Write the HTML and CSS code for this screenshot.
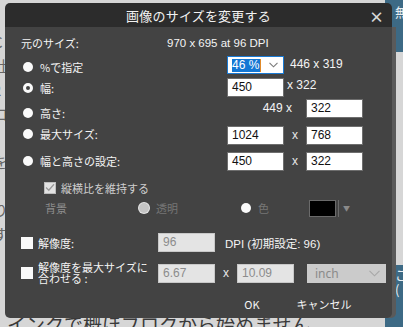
FILE: index.html
```html
<!DOCTYPE html>
<html lang="ja">
<head>
    <meta charset="UTF-8">
    <title>画像のサイズを変更する</title>
    <link rel="stylesheet" href="styles.css">
</head>
<body>
    <div class="backdrop">
        <div class="page-text">
            <p>C</p>
            <p>社</p>
            <p>2</p>
            <p>ロ</p>
            <p>/</p>
            <p>を</p>
            <p>!</p>
            <p>り</p>
            <p>す</p>
            <p class="page-line">インクで概ほブロクから始めません</p>
        </div>
        <div class="side">
            <div class="side-blue side-top">無</div>
            <div class="side-gray"></div>
            <div class="side-blue side-bottom">こ<br>(</div>
        </div>
    </div>

    <div class="dialog">
        <div class="titlebar">
            <span class="title">画像のサイズを変更する</span>
            <span class="close">×</span>
        </div>

        <div class="body">
            <div class="orig">
                <span class="orig-label">元のサイズ:</span>
                <span class="orig-value">970 x 695 at 96 DPI</span>
            </div>

            <div class="row row-pct">
                <label class="opt"><span class="radio"></span>%で指定</label>
                <div class="select active">
                    <span class="sel-text">46 %</span>
                    <svg class="chev" width="9" height="6" viewBox="0 0 9 6"><path d="M0.5 0.8 L4.5 4.8 L8.5 0.8" fill="none" stroke="#7a7a7a" stroke-width="1.1"/></svg>
                </div>
                <span class="note note-pct">446 x 319</span>
            </div>

            <div class="row row-w">
                <label class="opt"><span class="radio ring"></span>幅:</label>
                <div class="field">450</div>
                <span class="note note-w">x 322</span>
            </div>

            <div class="row row-h">
                <label class="opt"><span class="radio"></span>高さ:</label>
                <span class="note note-h">449 x</span>
                <div class="field">322</div>
            </div>

            <div class="row row-max">
                <label class="opt"><span class="radio"></span>最大サイズ:</label>
                <div class="field">1024</div>
                <span class="times">x</span>
                <div class="field">768</div>
            </div>

            <div class="row row-set">
                <label class="opt"><span class="radio"></span>幅と高さの設定:</label>
                <div class="field">450</div>
                <span class="times">x</span>
                <div class="field">322</div>
            </div>

            <div class="keep">
                <span class="check checked">
                    <svg width="10" height="9" viewBox="0 0 10 9"><path d="M1 4.5 L3.8 7.2 L9 1.2" fill="none" stroke="#9a9a9a" stroke-width="1.3"/></svg>
                </span>
                <span class="keep-label">縦横比を維持する</span>
            </div>

            <div class="bg-row">
                <span class="bg-label">背景</span>
                <span class="bg-opt bg-opt-clear"><span class="radio dim"></span>透明</span>
                <span class="bg-opt bg-opt-color"><span class="radio"></span>色</span>
                <span class="swatch"></span>
                <span class="swatch-drop">▼</span>
            </div>

            <div class="res res-dpi">
                <label class="res-opt"><span class="check"></span>解像度:</label>
                <div class="field off">96</div>
                <span class="dpi-note">DPI (初期設定: 96)</span>
            </div>

            <div class="res res-fit">
                <label class="res-opt"><span class="check"></span><span class="two-line">解像度を最大サイズに<br>合わせる :</span></label>
                <div class="field off">6.67</div>
                <span class="times">x</span>
                <div class="field off">10.09</div>
                <div class="select off">
                    <span class="sel-text">inch</span>
                    <svg class="chev" width="11" height="7" viewBox="0 0 11 7"><path d="M0.5 0.8 L5.5 5.8 L10.5 0.8" fill="none" stroke="#a8a8a8" stroke-width="1.1"/></svg>
                </div>
            </div>

            <div class="actions">
                <button class="btn">OK</button>
                <button class="btn">キャンセル</button>
            </div>
        </div>
    </div>
</body>
</html>
```

FILE: styles.css
```css
* {
    margin: 0;
    padding: 0;
    box-sizing: border-box;
}

body {
    width: 403px;
    height: 327px;
    overflow: hidden;
    position: relative;
    background: #d6d6d6;
    font-family: "Noto Sans CJK JP", "Noto Sans", sans-serif;
}

/* page behind the dialog */
.backdrop {
    display: flex;
    height: 327px;
}

.page-text {
    flex: 1;
    display: flex;
    flex-direction: column;
    padding-top: 30px;
    margin-left: -7px;
    color: #666;
    font-size: 15px;
    line-height: 24px;
}

.page-text .page-line {
    margin-top: auto;
    margin-bottom: -10px;
    margin-left: 14px;
    font-size: 19px;
    line-height: 26px;
    color: #3a3a3a;
    white-space: nowrap;
}

.side {
    width: 18px;
    display: flex;
    flex-direction: column;
}

.side-blue {
    background: #3d6a85;
    color: #e8eef2;
    font-size: 13px;
    line-height: 15px;
    padding-left: 10px;
}

.side-top {
    height: 52px;
    padding-top: 4px;
}

.side-gray {
    flex: 1;
}

.side-bottom {
    height: 62px;
    padding-top: 2px;
}

/* dialog */
.dialog {
    position: absolute;
    left: 5px;
    top: 3px;
    width: 387px;
    height: 315px;
}

.titlebar {
    height: 24px;
    background: #2c2c2c;
    border-radius: 5px 5px 0 0;
    display: flex;
    align-items: center;
    justify-content: center;
    position: relative;
}

.title {
    color: #f2f2f2;
    font-size: 13px;
    letter-spacing: 0.2px;
}

.close {
    position: absolute;
    right: 8px;
    top: 3px;
    color: #d8d8d8;
    font-size: 15px;
    font-weight: bold;
}

.body {
    height: 291px;
    background: #434343;
    border-radius: 0 0 5px 5px;
    box-shadow: 4px 0 0 #5a5a5a;
    padding: 9px 0 0 16px;
    color: #f4f4f4;
    font-size: 11px;
}

.orig {
    height: 20px;
    display: flex;
    line-height: 14px;
}

.orig-label {
    width: 146px;
}

.orig-value {
    font-family: "Liberation Sans", sans-serif;
    font-size: 11.5px;
}

/* size options */
.row {
    display: grid;
    grid-template-columns: 206px 57px 22px 57px 1fr;
    align-items: start;
}

.opt {
    display: flex;
    align-items: center;
    padding-left: 2px;
    line-height: 14px;
}

.radio {
    width: 10px;
    height: 10px;
    border-radius: 50%;
    background: #fafafa;
    margin-right: 7px;
    flex: none;
}

.radio.ring {
    background: #434343;
    border: 3px solid #fafafa;
}

.radio.dim {
    background: #c4c4c4;
    box-shadow: 0 0 0 1px #e6e6e6;
}

.field,
.select {
    height: 19px;
    border: 1px solid #6e6e6e;
    background: #fff;
    color: #111;
    font-family: "Liberation Sans", sans-serif;
    font-size: 12px;
    line-height: 17px;
    padding-left: 4px;
}

.select {
    display: flex;
    justify-content: space-between;
    align-items: center;
    padding-right: 5px;
}

.select.active {
    height: 18px;
    border-color: #1a7ad4;
}

.select.active .sel-text {
    background: #1477d4;
    color: #fff;
    line-height: 13px;
    padding-right: 1px;
    border-right: 1px solid #e08a2a;
}

.note {
    font-family: "Liberation Sans", sans-serif;
    font-size: 12px;
    line-height: 14px;
    color: #f4f4f4;
    white-space: nowrap;
}

.times {
    font-family: "Liberation Sans", sans-serif;
    font-size: 12px;
    line-height: 19px;
    text-align: center;
    color: #e8e8e8;
}

.row-pct {
    height: 22px;
}

.row-pct .opt {
    padding-top: 4px;
}

.note-pct {
    grid-column: 3 / 6;
    padding-left: 6px;
    padding-top: 1px;
}

.row-w {
    height: 21px;
}

.row-w .opt {
    padding-top: 3px;
}

.note-w {
    grid-column: 3 / 6;
    padding-left: 3px;
    padding-top: 0;
}

.row-h {
    height: 27px;
}

.row-h .opt {
    padding-top: 7px;
}

.note-h {
    grid-column: 2 / 4;
    text-align: right;
    padding-right: 14px;
    padding-top: 2px;
}

.row-max {
    height: 26px;
}

.row-max .opt {
    padding-top: 1px;
}

.row-set {
    height: 26px;
}

.row-set .opt {
    padding-top: 2px;
}

/* keep ratio */
.keep {
    height: 19px;
    display: flex;
    align-items: center;
    padding-left: 23px;
}

.check {
    width: 12px;
    height: 12px;
    background: #fafafa;
    flex: none;
    display: flex;
    align-items: center;
    justify-content: center;
}

.check.checked {
    background: #e2e2e2;
    border: 1px solid #bdbdbd;
}

.keep-label {
    margin-left: 5px;
    color: #cfcfcf;
    font-size: 11px;
}

/* background */
.bg-row {
    height: 20px;
    display: flex;
    align-items: center;
    padding-left: 24px;
    margin-top: 1px;
}

.bg-label {
    width: 94px;
    color: #8e8e8e;
    font-size: 11px;
}

.bg-opt {
    display: flex;
    align-items: center;
    color: #767676;
    font-size: 11px;
}

.bg-opt-clear {
    width: 102px;
}

.bg-opt-color {
    width: 68px;
}

.swatch {
    width: 27px;
    height: 17px;
    background: #000;
    border: 1px solid #6a6a6a;
}

.swatch-drop {
    margin-left: 2px;
    padding-left: 4px;
    border-left: 1px solid #6a6a6a;
    height: 17px;
    line-height: 17px;
    font-size: 7px;
    color: #8a8a8a;
}

/* resolution */
.res {
    display: grid;
    grid-template-columns: 137px 57px 22px 57px 1fr;
    align-items: center;
}

.res-dpi {
    margin-top: 15px;
    height: 19px;
}

.res-fit {
    margin-top: 10px;
    height: 22px;
}

.res-opt {
    display: flex;
    align-items: center;
    font-size: 11px;
}

.res-opt .check {
    margin-right: 5px;
}

.two-line {
    line-height: 11px;
}

.field.off,
.select.off {
    background: #e4e4e4;
    border-color: #c8c8c8;
    color: #8c8c8c;
}

.select.off {
    background: #cbcbcb;
    border-color: #cbcbcb;
    margin-left: 13px;
    width: 79px;
    color: #8a8a8a;
    font-family: "Noto Sans", sans-serif;
    padding-left: 7px;
}

.dpi-note {
    grid-column: 3 / 6;
    padding-left: 10px;
    font-size: 11.5px;
    font-family: "Liberation Sans", "Noto Sans CJK JP", sans-serif;
    color: #f4f4f4;
}

/* buttons */
.actions {
    display: flex;
    justify-content: flex-end;
    gap: 8px;
    padding-right: 36px;
    margin-top: 11px;
}

.btn {
    width: 64px;
    height: 18px;
    border: none;
    background: transparent;
    color: #f4f4f4;
    font-family: "Noto Sans CJK JP", sans-serif;
    font-size: 11px;
}
```
